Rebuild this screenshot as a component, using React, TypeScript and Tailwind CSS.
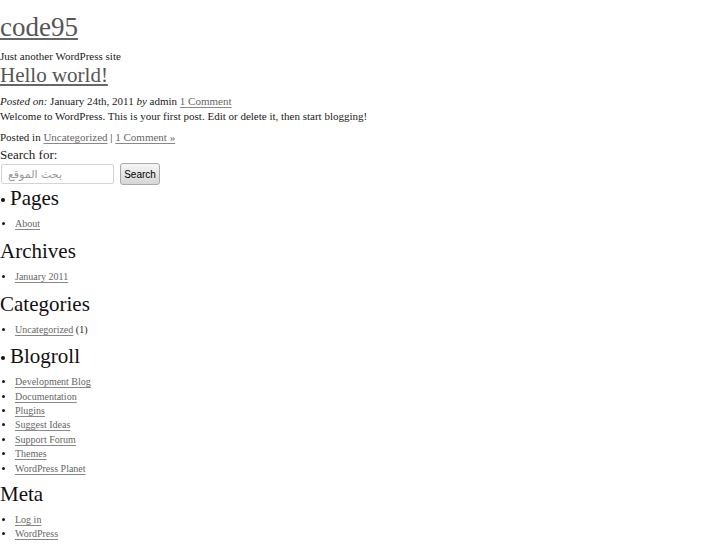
import React from "react";

const serif = "font-['Liberation_Serif',serif]";

const blogroll = [
  "Development Blog",
  "Documentation",
  "Plugins",
  "Suggest Ideas",
  "Support Forum",
  "Themes",
  "WordPress Planet",
];

function Link({ children }: { children: React.ReactNode }) {
  return (
    <a href="#" className="text-[#666] underline decoration-[#888] underline-offset-[2px]">
      {children}
    </a>
  );
}

function Heading({ children, dot }: { children: React.ReactNode; dot?: boolean }) {
  return (
    <h2 className="flex items-center text-[21px] leading-[24px] text-[#111]">
      {dot && <span className="mr-[5px] ml-[1px] mt-[3px] h-[4px] w-[4px] rounded-full bg-[#111]" />}
      {children}
    </h2>
  );
}

function LinkList({ items }: { items: React.ReactNode[] }) {
  return (
    <ul className="mt-[7px] list-disc pl-[15px] text-[10px] leading-[14.4px]">
      {items.map((item, i) => (
        <li key={i}>{item}</li>
      ))}
    </ul>
  );
}

export default function App() {
  return (
    <div className={`${serif} min-h-[545px] w-[727px] bg-white pt-[11px] text-[#1a1a1a]`}>
      {/* Header */}
      <h1 className="text-[27px] leading-[32px]">
        <a href="#" className="text-[#555] underline decoration-[#666]">
          code95
        </a>
      </h1>
      <p className="mt-[6px] text-[11px] leading-[14px]">Just another WordPress site</p>

      {/* Post */}
      <h2 className="text-[21px] leading-[24px]">
        <a href="#" className="text-[#555] underline decoration-[#666]">
          Hello world!
        </a>
      </h2>
      <div className="mt-[7px] text-[11px] leading-[15px]">
        <p>
          <em>Posted on:</em> January 24th, 2011 <em>by</em> admin <Link>1 Comment</Link>
        </p>
        <p>Welcome to WordPress. This is your first post. Edit or delete it, then start blogging!</p>
        <p className="mt-[6px]">
          Posted in <Link>Uncategorized</Link> | <Link>1 Comment »</Link>
        </p>
      </div>

      {/* Search */}
      <form className="mt-[1px]" onSubmit={(e) => e.preventDefault()}>
        <label className="block text-[13px] leading-[17px]">Search for:</label>
        <div className="flex h-[22px] items-center">
          <input
            placeholder="بحث الموقع"
            className="ml-[1px] h-[20px] w-[113px] rounded-[2px] border border-[#d4d4d4] px-[6px] text-[11px] font-['DejaVu_Sans',sans-serif] placeholder:text-[#999] outline-none"
          />
          <button
            type="submit"
            className="ml-[6px] h-[22px] w-[40px] rounded-[3px] border border-[#a9a9a9] bg-gradient-to-b from-[#f6f6f6] to-[#d6d6d6] font-['Liberation_Sans',sans-serif] text-[10px] text-black"
          >
            Search
          </button>
        </div>
      </form>

      {/* Sidebar */}
      <div className="mt-[1px]">
        <Heading dot>Pages</Heading>
        <LinkList items={[<Link>About</Link>]} />

        <div className="mt-[8px]">
          <Heading>Archives</Heading>
          <LinkList items={[<Link>January 2011</Link>]} />
        </div>

        <div className="mt-[7px]">
          <Heading>Categories</Heading>
          <LinkList
            items={[
              <>
                <Link>Uncategorized</Link> (1)
              </>,
            ]}
          />
        </div>

        <div className="mt-[7px]">
          <Heading dot>Blogroll</Heading>
          <LinkList items={blogroll.map((b) => <Link>{b}</Link>)} />
        </div>

        <div className="mt-[6px]">
          <Heading>Meta</Heading>
          <LinkList items={[<Link>Log in</Link>, <Link>WordPress</Link>]} />
        </div>
      </div>
    </div>
  );
}
